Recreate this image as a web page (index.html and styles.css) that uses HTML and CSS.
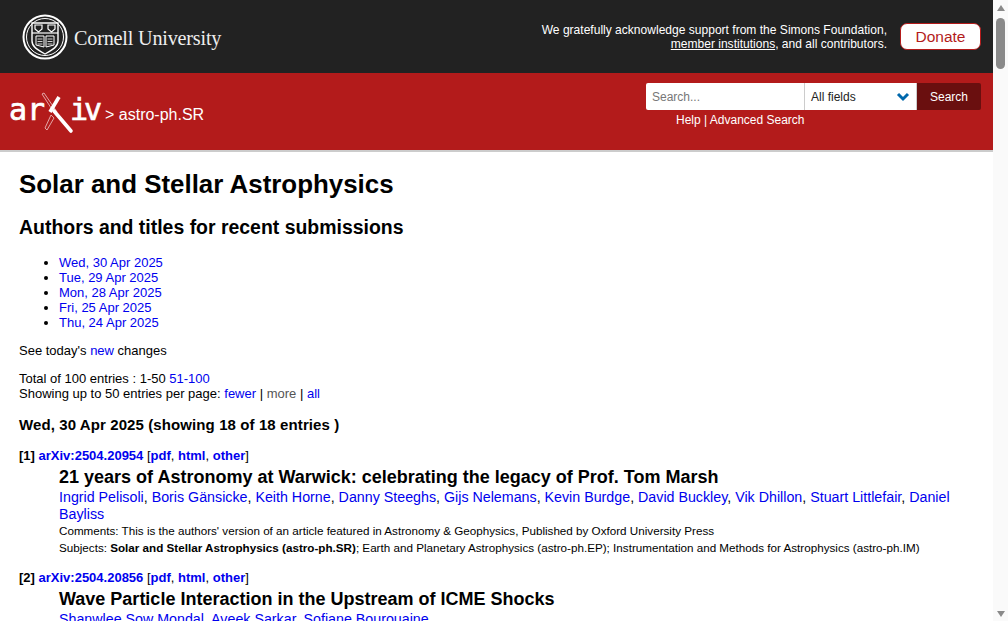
FILE: index.html
```html
<!DOCTYPE html>
<html lang="en">
<head>
<meta charset="utf-8">
<title>Solar and Stellar Astrophysics</title>
<link rel="stylesheet" href="styles.css">
</head>
<body>
<div class="page">
  <div class="content">
    <header>
      <div class="cu-bar">
        <div class="cu-logo">
          <svg class="seal" width="46" height="46" viewBox="0 0 46 46" fill="none" stroke="#fff">
            <circle cx="23" cy="23" r="21.500" stroke-width="2"/>
            <circle cx="23" cy="23" r="18.500" stroke-width="1"/>
            <path d="M10 9H36V27C36 33 30 36 23 40C16 36 10 33 10 27Z" stroke-width="1.400"/>
            <path d="M10 19H36" stroke-width="1.200"/>
            <path d="M13 11H20V15L16.500 18L13 15ZM26 11H33V15L29.500 18L26 15Z" stroke-width="1.200"/>
            <path d="M14 22H22V33L14 31ZM32 22H24V33L32 31Z" stroke-width="1"/>
            <path d="M15.500 25H20.500M15.500 27.500H20.500M15.500 30H20.500M25.500 25H30.500M25.500 27.500H30.500M25.500 30H30.500" stroke-width="0.800"/>
          </svg>
          <span class="cu-name">Cornell University</span>
        </div>
        <div class="support">
          <p class="ack">We gratefully acknowledge support from the Simons Foundation,<br><a href="#">member institutions</a>, and all contributors.</p>
          <a class="donate" href="#">Donate</a>
        </div>
      </div>
      <div class="ax-bar">
        <div class="ax-brand">
          <svg class="ax-logo" width="91" height="42" viewBox="0 0 91 42" fill="none">
            <text class="ax-letters" x="-1" y="28">ar</text>
            <text class="ax-letters ax-iv" x="60" y="28">iv</text>
            <path d="M32 2L34 1L47 20L45 22Z" stroke="#e8b5b5" stroke-width="0.900"/>
            <path d="M35 36L37 38L44 26L41 23Z" stroke="#e8b5b5" stroke-width="0.900"/>
            <path d="M49 5L40 20" stroke="#fff" stroke-width="3.600"/>
            <path d="M44 19L61 39" stroke="#fff" stroke-width="3.600" stroke-linecap="round"/>
          </svg>
          <span class="crumb">&gt; <span class="crumb-cat">astro-ph.SR</span></span>
        </div>
        <div class="search-block">
          <div class="search-row">
            <span class="search-input">Search...</span>
            <span class="search-field">All fields
              <svg class="chev" width="14" height="10" viewBox="0 0 14 10" fill="none" stroke="#0068ac" stroke-width="3"><path d="M2 2L7 7L12 2"/></svg>
            </span>
            <span class="search-btn">Search</span>
          </div>
          <div class="search-help"><a href="#">Help</a> | <a href="#">Advanced Search</a></div>
        </div>
      </div>
    </header>
    <main>
      <h1>Solar and Stellar Astrophysics</h1>
      <h2>Authors and titles for recent submissions</h2>
      <ul class="dates">
        <li><a href="#">Wed, 30 Apr 2025</a></li>
        <li><a href="#">Tue, 29 Apr 2025</a></li>
        <li><a href="#">Mon, 28 Apr 2025</a></li>
        <li><a href="#">Fri, 25 Apr 2025</a></li>
        <li><a href="#">Thu, 24 Apr 2025</a></li>
      </ul>
      <p class="today">See today's <a href="#">new</a> changes</p>
      <p class="paging">Total of 100 entries : 1-50 <a href="#">51-100</a><br>Showing up to 50 entries per page: <a href="#">fewer</a> | <span class="muted">more</span> | <a href="#">all</a></p>
      <h3>Wed, 30 Apr 2025 (showing 18 of 18 entries )</h3>
      <div class="entry">
        <div class="entry-id"><b>[1]</b> <a class="b" href="#">arXiv:2504.20954</a> [<a class="b" href="#">pdf</a>, <a class="b" href="#">html</a>, <a class="b" href="#">other</a>]</div>
        <div class="entry-body">
          <div class="title">21 years of Astronomy at Warwick: celebrating the legacy of Prof. Tom Marsh</div>
          <div class="authors"><a href="#">Ingrid Pelisoli</a>, <a href="#">Boris Gänsicke</a>, <a href="#">Keith Horne</a>, <a href="#">Danny Steeghs</a>, <a href="#">Gijs Nelemans</a>, <a href="#">Kevin Burdge</a>, <a href="#">David Buckley</a>, <a href="#">Vik Dhillon</a>, <a href="#">Stuart Littlefair</a>, <a href="#">Daniel Bayliss</a></div>
          <div class="meta">Comments: This is the authors' version of an article featured in Astronomy &amp; Geophysics, Published by Oxford University Press</div>
          <div class="meta">Subjects: <b class="primary">Solar and Stellar Astrophysics (astro-ph.SR)</b>; Earth and Planetary Astrophysics (astro-ph.EP); Instrumentation and Methods for Astrophysics (astro-ph.IM)</div>
        </div>
      </div>
      <div class="entry">
        <div class="entry-id"><b>[2]</b> <a class="b" href="#">arXiv:2504.20856</a> [<a class="b" href="#">pdf</a>, <a class="b" href="#">html</a>, <a class="b" href="#">other</a>]</div>
        <div class="entry-body">
          <div class="title">Wave Particle Interaction in the Upstream of ICME Shocks</div>
          <div class="authors"><a href="#">Shanwlee Sow Mondal</a>, <a href="#">Aveek Sarkar</a>, <a href="#">Sofiane Bourouaine</a></div>
        </div>
      </div>
    </main>
  </div>
  <div class="scrollbar">
    <span class="arrow-up"></span>
    <span class="thumb"></span>
    <span class="track"></span>
    <span class="arrow-down"></span>
  </div>
</div>
</body>
</html>
```
FILE: styles.css
```css
html, body { margin: 0; padding: 0; height: 621px; overflow: hidden; background: #fff; }
body { font-family: "Liberation Sans", Arial, sans-serif; font-size: 13px; color: #000; }
a { color: #0000ee; text-decoration: none; }
p { margin: 0; }

.page { display: flex; height: 621px; overflow: hidden; }
.content { flex: 1; min-width: 0; overflow: hidden; }

.cu-bar { height: 73px; background: #222; display: flex; justify-content: space-between; align-items: center; padding: 0 12px 0 22px; color: #fff; }
.cu-logo { display: flex; align-items: center; gap: 6px; }
.seal { display: block; }
.cu-name { font-family: "Liberation Serif", serif; font-size: 20.200px; letter-spacing: -0.200px; color: #eee; margin-top: 3px; }
.support { display: flex; align-items: center; gap: 13px; }
.ack { font-size: 12.050px; line-height: 14px; text-align: right; }
.ack a { color: #fff; text-decoration: underline; }
.donate { display: block; width: 79px; height: 25px; line-height: 25px; text-align: center; background: #fff; color: #b31b1b; border: 1px solid #b31b1b; border-radius: 7px; font-size: 15.500px; }

.ax-bar { height: 77px; background: #b31b1b; border-bottom: 2px solid #ccc; display: flex; justify-content: space-between; padding: 0 12px 0 10px; color: #fff; }
.ax-brand { display: flex; align-items: flex-start; padding-top: 19px; }
.ax-logo { display: block; flex: none; overflow: visible; }
.ax-letters { font-family: "DejaVu Sans Mono", monospace; font-size: 30px; fill: #fff; stroke: #fff; stroke-width: 0.700px; }
.ax-iv { letter-spacing: -4px; }
.crumb { margin: 14px 0 0 4px; font-size: 16px; line-height: 18px; }
.search-block { padding-top: 10px; }
.search-row { display: flex; height: 27px; font-size: 12px; line-height: 28px; }
.search-input { width: 152px; padding-left: 6px; background: #fff; color: #777; border-radius: 2px 0 0 2px; }
.search-field { width: 99px; padding: 0 6px; background: #fff; color: #222; border-left: 1px solid #ccc; border-right: 1px solid #ccc; display: flex; justify-content: space-between; align-items: center; }
.chev { display: block; }
.search-btn { width: 64px; text-align: center; background: #6a0f0f; color: #fff; border-radius: 0 2px 2px 0; }
.search-help { padding-left: 30px; font-size: 12px; line-height: 14px; margin-top: 3px; white-space: nowrap; color: #fff; }
.search-help a { color: #fff; }

main { padding: 0 19px; }
h1 { margin: 16px 0 0; font-size: 25.900px; line-height: 32px; font-weight: bold; }
h2 { margin: 15px 0 0; font-size: 19.450px; line-height: 24px; font-weight: bold; }
h3 { margin: 15px 0 0; font-size: 15px; line-height: 18px; font-weight: bold; letter-spacing: 0.100px; }
.dates { margin: 16px 0 0; padding-left: 40px; line-height: 15px; }
.today { margin-top: 13px; line-height: 16px; }
.paging { margin-top: 12px; line-height: 15px; }
.muted { color: #555; }
.entry { margin-top: 14px; }
.entry-id { line-height: 16px; }
.b { font-weight: bold; }
.entry-body { padding-left: 40px; margin-bottom: 12px; }
.title { font-size: 18px; font-weight: bold; line-height: 23px; margin-top: 2px; }
.authors { font-size: 14.250px; line-height: 17px; margin-bottom: -1px; }
.meta { font-size: 11.660px; line-height: 17px; }
.primary { font-weight: bold; }

.scrollbar { flex: none; width: 15px; background: #fafafa; display: flex; flex-direction: column; align-items: center; }
.arrow-up { width: 0; height: 0; margin-top: 5px; border: 4.500px solid transparent; border-top: 0; border-bottom: 6px solid #8a8a8a; }
.thumb { width: 9px; height: 51px; margin-top: 7px; background: #8a8a8a; border-radius: 4.500px; }
.track { flex: 1; }
.arrow-down { width: 0; height: 0; margin-bottom: 4px; border: 4.500px solid transparent; border-bottom: 0; border-top: 6px solid #8a8a8a; }
```
